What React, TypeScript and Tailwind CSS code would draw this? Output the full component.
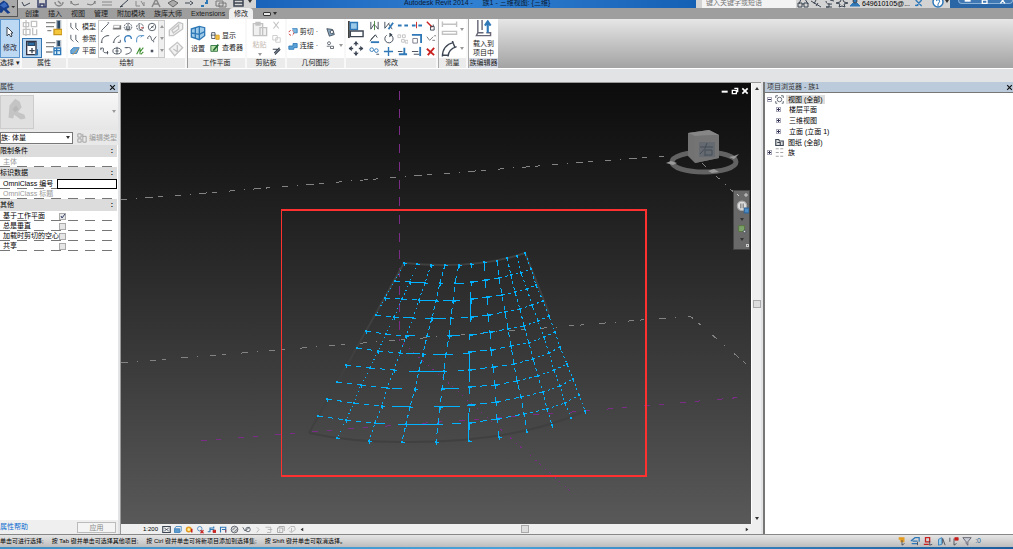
import React from "react";
import type { ReactNode } from "react";

type Glyph = { label: string; art: ReactNode };

const INK = "#3c4653";
const BLUE = "#2f78b8";
const RED = "#c8201e";
const PALE = "#c2c2c2";
const CYAN = "#00b2ff";

function Svg({ children, className = "size-3", box = "0 0 12 12" }: { children: ReactNode; className?: string; box?: string }) {
  return (
    <svg viewBox={box} className={`block shrink-0 ${className}`} fill="none" stroke={INK} strokeWidth="1" aria-hidden="true">
      {children}
    </svg>
  );
}

function IconButton({ label, art, className = "size-3" }: Glyph & { className?: string }) {
  return (
    <button type="button" aria-label={label} className="flex items-center justify-center">
      <Svg className={className}>{art}</Svg>
    </button>
  );
}

function Panel({ title, width, children, highlight = false }: { title: string; width: string; children: ReactNode; highlight?: boolean }) {
  return (
    <section className={`flex shrink-0 flex-col bg-white ${width}`}>
      <div className="flex flex-1 items-center justify-center overflow-hidden">{children}</div>
      <h2 className={`h-[10px] text-center text-[7px] leading-[10px] text-[#222] ${highlight ? "bg-[#d5d9e4]" : "bg-[#ebebeb]"}`}>{title}</h2>
    </section>
  );
}

const quickTools: Glyph[] = [
  { label: "打开", art: <path d="M2 2 4 6l6-3" /> },
  { label: "保存", art: <path d="M2 0v7h8V0M4 7V4h4v3" stroke="#37406b" strokeWidth="1.5" /> },
  { label: "同步", art: <path d="M2 2a4 4 0 0 0 8 0M5 1l3 3" stroke="#888" strokeWidth="1.5" /> },
  { label: "放弃", art: <path d="M2 1q1 4 4 4l4-1M2 1v3" stroke="#777" /> },
  { label: "重做", art: <path d="M10 1q-1 4-4 4L2 4M10 1v3" stroke="#777" /> },
  { label: "测量", art: <path d="M1 2h10M1 5h10" stroke="#888" /> },
  { label: "对齐", art: <path d="m2 7 8-7M2 7l3-1" /> },
  { label: "标记", art: <path d="M2 1v5h4M7 1l3 5V2" stroke="#888" /> },
  { label: "文字", art: <path d="m2 7 4-8 4 8M4 4h4" stroke="#888" strokeWidth="1.5" /> },
  { label: "三维", art: <path d="m1 3 5-3 5 3-5 4Z" stroke="#666" fill="#aaa" /> },
  { label: "剖面", art: <path d="M2 3h5M7 1l3 2-3 2" /> },
  { label: "细线", art: <path d="M2 6h3M6 3h3M8 0v2" stroke={BLUE} strokeWidth="2" /> },
  { label: "窗口", art: <path d="M1 1h7v5H1zM4 3h7v4H4z" stroke="#777" /> },
  { label: "切换窗口", art: <path d="M2 0h9v6H2zM2 3h9" strokeWidth="1.5" /> },
];

const drawTools: Glyph[] = [
  { label: "直线", art: <path d="m2 10 8-8M1 11h2M9 1h2" /> },
  { label: "矩形", art: <><path d="M1 8h9V4" strokeWidth="2" stroke="#777" /><path d="M2 8V4h7" stroke="#aaa" /></> },
  { label: "内接多边形", art: <><circle cx="6" cy="6" r="4.5" strokeDasharray="2 1" /><path d="M6 2v7M4 5v4h4V5" /></> },
  { label: "外接多边形", art: <><circle cx="6" cy="6" r="4" strokeDasharray="3 1" /><path d="M5 3v5l5 3" /><path d="M7 7h3" stroke={RED} /></> },
  { label: "圆形", art: <><circle cx="6" cy="6" r="4.5" /><path d="m4 8 4-4M5 6h3" /></> },
  { label: "起点终点半径弧", art: <path d="M2 10Q2 3 9 2M1 10h2M8 2h3" /> },
  { label: "圆心端点弧", art: <path d="M2 10Q3 4 9 2M7 10h3V7M1 10h2" /> },
  { label: "相切端点弧", art: <path d="M3 10Q0 3 6 2q4 0 4 4" stroke={BLUE} strokeWidth="1.5" /> },
  { label: "圆角弧", art: <path d="M2 10V7q0-5 5-5h4M7 4l2-2" stroke={BLUE} /> },
  { label: "样条曲线", art: <path d="M1 4q3-4 4 1t3 2l3-4M1 4v2M8 8v2" /> },
  { label: "拟合样条", art: <path d="M1 3q4-2 3 2t6 3M1 2v3M9 6v4" /> },
  { label: "椭圆", art: <><ellipse cx="6" cy="6" rx="5" ry="3.5" /><path d="M6 1v9M4 6h4" /></> },
  { label: "半椭圆", art: <path d="M4 2q6-1 6 3t-7 5M2 2h3" /> },
  { label: "拾取线", art: <path d="m2 10 4-8v8M6 7l4-5M7 10l3-3" stroke="#3f8f32" strokeWidth="1.3" /> },
  { label: "点图元", art: <rect x="5" y="5" width="2" height="2" fill="#667" /> },
];

const modifyTools: Glyph[] = [
  { label: "镜像拾取轴", art: <><path d="M2 2v8l4-6v6M10 2v8L7 6" /><path d="M6 1v10" stroke="#4b8b43" /></> },
  { label: "镜像绘制轴", art: <><path d="M2 2v7l5-6M6 4l4 6" /><path d="m6 10 5-7" stroke={BLUE} strokeWidth="2" /></> },
  { label: "拆分图元", art: <path d="M1 5h4v2H1zM8 5h4v2H8z" fill={BLUE} stroke={BLUE} strokeWidth="0" /> },
  { label: "间隙拆分", art: <><path d="M1 6h4M8 6h4" stroke={BLUE} strokeWidth="2" /><path d="M6 2v7" stroke={RED} /></> },
  { label: "解锁", art: <><path d="m2 2 6 6" stroke={RED} strokeWidth="1.5" /><path d="M6 7h4v4H6zM9 5v2" /></> },
  { label: "偏移", art: <><path d="m1 9 6-7M2 7l5-5 2 3" stroke={INK} /><path d="M2 10h9" stroke={BLUE} strokeWidth="2" /></> },
  { label: "旋转", art: <><path d="M4 2.5A4.5 4.5 0 1 0 8 2" /><path d="m7 0 3 2-3 2" fill={INK} /></> },
  { label: "阵列", art: <path d="M1 2h3v3H1zM6 2h3v3H6zM5 7h3v3H5zM9 8h3v3H9z" stroke={PALE} /> },
  { label: "缩放", art: <><path d="M1 2h10v9" stroke={BLUE} strokeWidth="2" /><path d="M2 6h5v5H2z" stroke="#778" /></> },
  { label: "锁定", art: <path d="m2 4 3 4 4-4M8 8h3M10 3h2" stroke="#777" /> },
  { label: "复制", art: <><circle cx="3" cy="4" r="2" stroke={BLUE} /><circle cx="8" cy="5" r="2" stroke={BLUE} /><path d="M8 9h3" /></> },
  { label: "修剪", art: <path d="M6 1v10M1 6h10M4 6h4" stroke={BLUE} strokeWidth="1.5" /> },
  { label: "修剪延伸单个", art: <><path d="M2 9h9M8 2v6" stroke={BLUE} strokeWidth="2" /><path d="M1 6h5" /></> },
  { label: "修剪延伸多个", art: <><path d="M10 1v10" stroke={BLUE} strokeWidth="2" /><path d="M1 6h7M3 9h6" /></> },
  { label: "删除", art: <path d="m2 3 8 7M10 2 3 10" stroke={RED} strokeWidth="2" /> },
];

const viewTools: Glyph[] = [
  { label: "详细程度", art: <><path d="M1 2h10v8H1z" strokeWidth="1.5" /><path d="m3 4 6 4M9 4 3 8" /></> },
  { label: "视觉样式", art: <><path d="M2 5h7v5H2z" fill="#5a9bd0" stroke={BLUE} /><path d="M2 5 4 2h7v6L9 10" stroke={BLUE} /></> },
  { label: "日光路径", art: <><circle cx="5" cy="6" r="3" fill="#fff0a0" stroke="#e29a21" strokeWidth="2" /><path d="M9 5v5" stroke={RED} strokeWidth="2" /></> },
  { label: "阴影", art: <><circle cx="5" cy="5" r="3" stroke={BLUE} /><path d="m6 7 4 4M10 7l-4 4" stroke={RED} strokeWidth="1.5" /></> },
  { label: "渲染", art: <><path d="M1 9h3V4h5V2M4 6h5v4" stroke={BLUE} strokeWidth="1.5" /><path d="M8 7h4v3H8z" fill={RED} stroke={RED} /></> },
  { label: "裁剪视图", art: <><path d="M2 10V3h7v7M4 6h5" stroke={BLUE} strokeWidth="1.5" /><path d="M9 6v4" stroke={RED} /></> },
  { label: "显示裁剪", art: <><circle cx="6" cy="6" r="4.5" fill="#ddd" /><path d="m3 7 4-4M6 9l4-4" /></> },
  { label: "锁定三维", art: <><path d="m1 3 3 5 6-5" stroke={INK} /><circle cx="8" cy="6" r="3" /></> },
  { label: "临时隐藏", art: <path d="m5 3 3 3-3 4" stroke="#aaa" /> },
  { label: "显示隐藏", art: <path d="M2 3h7v7H4M5 6h6" stroke="#aaa" /> },
  { label: "属性预览", art: <path d="M2 4h7v6H2zM4 4V2h7v6M5 6v3" stroke="#999" /> },
  { label: "分析模型", art: <path d="m1 6 4-4h5l1 4-5 4-3-2M6 4v5" stroke="#aaa" /> },
];

const selectTools: Glyph[] = [
  { label: "选择链接", art: <><path d="M2 3h7M4 6h5" stroke="#e39b20" strokeWidth="3" /><path d="M6 5v6l3-2" /></> },
  { label: "选择底图图元", art: <><path d="m1 6 5-4h5v5M3 6h6M2 9h7" stroke={BLUE} strokeWidth="1.5" /><path d="M9 7v4" /></> },
  { label: "选择锁定图元", art: <><path d="M3 2h5v5H3zM1 10h6" stroke={RED} strokeWidth="1.5" /><path d="M8 6v5l3-1" /></> },
  { label: "按面选择", art: <><path d="m3 4 4-2v8l-4 1z" fill="#9bd0ec" stroke={BLUE} /><path d="m8 3 3 8M8 3v6" /></> },
  { label: "选择时拖拽", art: <><path d="M1 2v5M6 3v8l3-2" /><path d="M7 2h4v3H7z" fill={RED} stroke={RED} /></> },
  { label: "过滤器", art: <path d="M1 2h10L7 7v4L5 9V7z" stroke="#556" fill="#c8cdd4" /> },
];

const infoTools: Glyph[] = [
  { label: "搜索", art: <path d="M2 4 4-1M8-1l3 5M1 3h4v4H1zM7 3h4v4H7zM5 4h2" /> },
  { label: "通讯中心", art: <path d="m1 1 5 3 5 3M6 0l-2 4M8 3l-2 3" /> },
  { label: "订阅", art: <path d="M3 1q0 4 6 3M6 3v4H3h6M7 0l4 1" /> },
  { label: "收藏夹", art: <path d="m6-2 2 4 4 1-4 1 1 3-3-1-3 1 1-3-4-1 4-1Z" /> },
];

function Caret({ dim = false }: { dim?: boolean }) {
  return (
    <svg viewBox="0 0 4 3" className={`block h-[3px] w-1 shrink-0 ${dim ? "fill-[#999]" : "fill-[#333]"}`} aria-hidden="true">
      <path d="M0 0h4L2 3Z" />
    </svg>
  );
}

function TitleBar() {
  return (
    <header className="flex h-2 shrink-0 overflow-hidden bg-[#1c66bb]">
      <div className="flex w-64 shrink-0 items-start justify-between bg-[#d3d3d3] pr-1 pl-5">
        {quickTools.map((t) => (
          <IconButton key={t.label} {...t} className="h-3 w-3" />
        ))}
        <Caret />
      </div>
      <h1 className="min-w-0 flex-1 bg-linear-to-r from-[#1a63bb] via-[#2f7fd2] to-[#1460b4] pl-[148px] text-[7px] leading-[5px] whitespace-pre text-[#0b1a33]">
        Autodesk Revit 2014 -     族1 - 三维视图: {"{三维}"}
      </h1>
      <div className="flex w-[254px] shrink-0 items-start gap-px bg-[#d3d3d3] pl-[6px]">
        <input aria-label="搜索" placeholder="键入关键字或短语" className="h-2 w-[94px] shrink-0 bg-[#f3f3f3] pb-1 pl-1 text-[7px] leading-[4px] placeholder:text-[#777]" />
        {infoTools.map((t) => (
          <IconButton key={t.label} {...t} className="size-3" />
        ))}
        <Svg className="size-3"><path d="M1 6h10L8 3H4z" fill={BLUE} stroke={BLUE} /><circle cx="6" cy="1" r="2" fill={BLUE} /></Svg>
        <span className="text-[7px] leading-[7px] text-black">649610105@...</span>
        <Svg className="ml-1 size-2"><path d="M1 0 10 9M10 0 2 9M0 8h5" stroke={BLUE} strokeWidth="2" /></Svg>
        <Svg className="ml-2 size-3"><circle cx="6" cy="2" r="5" fill="#fff" stroke={BLUE} strokeWidth="1.5" /><path d="M4 1q2-3 4 0L6 4v2" stroke={BLUE} /></Svg>
        <Caret />
      </div>
      <div className="flex w-[63px] shrink-0 items-start bg-[#2a66a6] pl-2">
        <div className="flex h-1 flex-1 justify-around rounded-b-sm border border-t-0 border-[#8bb2d8] bg-[#4078b3]">
          <Svg className="size-2"><path d="M1 1h9" stroke="#fff" strokeWidth="3" /></Svg>
          <Svg className="size-2"><path d="M2 0h7v5H2z" stroke="#fff" strokeWidth="2" /></Svg>
          <Svg className="size-2"><path d="m2-3 7 8M9-3 2 5" stroke="#fff" strokeWidth="2" /></Svg>
        </div>
      </div>
    </header>
  );
}

function TabBar() {
  const tabs = ["创建", "插入", "视图", "管理", "附加模块", "族库大师", "Extensions"];
  return (
    <nav className="flex h-[11px] shrink-0 items-stretch bg-[#9e9e9e] text-[7px] leading-[11px] text-[#1c1c1c]">
      <div className="flex w-[229px] gap-[9px] pl-[25px]">
        {tabs.map((t) => (
          <a key={t} href="#ribbon" className="whitespace-nowrap">{t}</a>
        ))}
      </div>
      <a href="#ribbon" className="w-6 rounded-t-sm bg-[#efefef] text-center">修改</a>
      <button type="button" aria-label="最小化面板" className="flex items-center gap-0.5 pl-2.5">
        <span className="block h-1 w-2 rounded-[1px] border border-[#333] bg-[#e8e8e8]" />
        <Caret />
      </button>
    </nav>
  );
}

function SmallCommand({ label, art, dim = false }: Glyph & { dim?: boolean }) {
  return (
    <button type="button" className={`flex items-center gap-0.5 text-[7px] leading-[10px] whitespace-nowrap ${dim ? "text-[#aaa]" : "text-[#222]"}`}>
      <Svg className="size-[10px]">{art}</Svg>
      {label}
    </button>
  );
}

function Ribbon() {
  return (
    <div id="ribbon" className="flex h-[50px] shrink-0 border-b border-white bg-linear-to-b from-[#e6e6e6] to-[#a3a3a3]">
      <div className="flex gap-0.5 bg-[#f8f8f8]">
        <Panel title="选择 ▾" width="w-5 whitespace-nowrap">
          <button type="button" className="flex size-full flex-col items-center justify-center gap-1.5 border border-[#5a94cc] bg-[#bcd8f2] text-[7px] leading-[8px] text-[#223]">
            <Svg className="h-3 w-2" box="0 0 8 12"><path d="M1 1v9l2-2 2 3 1-1-1-3h2z" fill="#fff" /></Svg>
            修改
          </button>
        </Panel>
        <Panel title="属性" width="w-11">
          <div className="grid grid-cols-2 items-center gap-x-1 gap-y-0.5">
            <Svg className="size-4"><path d="M1 2h4v3H1zM7 1h4v4H7zM1 7h5v4H1zM8 6v5h3V7M3 0v12" stroke={PALE} /></Svg>
            <Svg className="size-4"><path d="M0 2h7M0 5h6M1 8h3" stroke="#888" /><path d="M8 0h3v7H8z" fill="#2c4a66" stroke="#b5bdc6" /><path d="M6 7h6v4H6z" fill="#f3c63c" stroke="#c9971e" /></Svg>
            <button type="button" aria-label="属性" className="border border-[#3475b4] bg-[#b7d6f1] p-px">
              <Svg className="size-4"><path d="M2 1h7v10H2z" fill="#fff" stroke="#334" /><path d="M3 2h5v2H3z" fill={BLUE} stroke="#2c4a66" /><path d="M4 8h4M6 6v4" /><path d="M10 7v4H8" stroke={BLUE} /></Svg>
            </button>
            <Svg className="size-4"><path d="M0 2h7M0 5h6M0 9h5" stroke="#888" /><path d="M8 0h3v5H8z" fill="#2c4a66" stroke="#b5bdc6" /><path d="M6 6h5v5H6zM6 8h5M8 6v5" fill="#d8effa" stroke={BLUE} /></Svg>
          </div>
        </Panel>
        <Panel title="绘制" width="w-[117px]">
          <div className="flex flex-1 items-center gap-0.5 pl-0.5">
            <div className="flex flex-col gap-0.5">
              <SmallCommand label="模型" art={<path d="M1 1v5l3 3M7 1v6l3 3" />} />
              <SmallCommand label="参照" art={<path d="M1 1v5l3 3M7 1v6l3 3" />} />
              <SmallCommand label="平面" art={<><path d="m1 5 3-3h7l-3 7H1z" fill="#6da8d6" stroke={BLUE} /><path d="m3 11 7-8" stroke="#d8993f" /></>} />
            </div>
            <div className="flex flex-1 border border-[#c9c9c9]">
              <div className="grid flex-1 grid-cols-5">
                {drawTools.map((t) => (
                  <IconButton key={t.label} {...t} className="h-3 w-[10px]" />
                ))}
              </div>
              <div className="flex w-1.5 flex-col items-center justify-around border-l border-[#d6d6d6] bg-[#efefef]">
                <span className="rotate-180"><Caret dim /></span>
                <Caret dim />
                <Caret dim />
              </div>
            </div>
            <div className="flex flex-col gap-1">
              <Svg className="h-4 w-[18px]"><path d="m1 7 7-6 3 1v4l-7 5H1zM3 7l5-4v3L4 9z" stroke="#c4c4c4" fill="#f2f2f2" /></Svg>
              <Svg className="h-4 w-[18px]"><path d="m1 6 6-5 4 4-6 6zM4 6l3 2M7 3v5" stroke="#c4c4c4" fill="#f2f2f2" /></Svg>
            </div>
          </div>
        </Panel>
        <Panel title="工作平面" width="w-[58px] border-l border-[#999]">
          <div className="flex gap-1">
            <button type="button" className="flex flex-col items-center gap-1 text-[7px] leading-[8px] text-[#222]">
              <Svg className="size-4"><path d="m1 3 6-2 4 1v6l-4 3-6-2z" fill="#9fcbe8" stroke={BLUE} /><path d="M4 2v8M7 1v10M1 6l6 1 4-2" stroke={BLUE} /></Svg>
              设置
            </button>
            <div className="flex flex-col justify-end gap-0.5">
              <SmallCommand label="显示" art={<><path d="M2 2h4v7H2zM1 5h6" /><path d="M7 5h4v5H7z" fill="#f2c445" stroke="#d79a21" /></>} />
              <SmallCommand label="查看器" art={<><path d="M1 3h8v7H1z" fill="#b9e0a8" stroke="#246b35" /><path d="m4 9 6-7" stroke="#246b35" strokeWidth="2" /></>} />
            </div>
          </div>
        </Panel>
        <Panel title="剪贴板" width="w-[38px]">
          <div className="flex gap-1">
            <button type="button" className="flex flex-col items-center gap-1 text-[7px] leading-[8px] text-[#c4b8ae]">
              <Svg className="size-4"><path d="M1 2h7v9H1zM3 1h3v2H3zM6 5h5v6H6z" stroke={PALE} fill="#f0f0f0" /></Svg>
              粘贴
              <Caret dim />
            </button>
            <div className="flex flex-col justify-between">
              <Svg className="size-[9px]"><path d="m2 1 7 9M9 1 2 10" stroke={PALE} strokeWidth="1.5" /></Svg>
              <Svg className="size-[9px]"><path d="M1 2h6v6H1zM5 5h6v6H5z" stroke={PALE} fill="#fff" /></Svg>
              <Svg className="size-[9px]"><path d="M1 3h6M3 8l7-7M4 10l7-7" strokeWidth="1.5" /></Svg>
            </div>
          </div>
        </Panel>
        <Panel title="几何图形" width="w-[57px]">
          <div className="flex items-center gap-2">
            <div className="flex flex-col gap-1">
              <SmallCommand label="剪切 ·" art={<><circle cx="4" cy="7" r="3" stroke={RED} strokeDasharray="3 2" /><path d="M5 2h6v5H7" fill="#7db8df" stroke={BLUE} /></>} />
              <SmallCommand label="连接 ·" art={<path d="M1 6h5V3h5v5H7v2H1z" fill="#5aa2d5" stroke={BLUE} />} />
            </div>
            <div className="flex flex-col gap-1">
              <Svg className="size-[10px]"><path d="m1 2 7 1 2 6-6 2z" fill="#8aa9c0" /><circle cx="7" cy="6" r="2" fill="#fff" /></Svg>
              <div className="flex items-center gap-1">
                <Svg className="size-[9px]"><circle cx="4" cy="3" r="2" /><path d="M1 7h4M6 7h4v3H6z" /></Svg>
                <Caret dim />
              </div>
            </div>
          </div>
        </Panel>
        <Panel title="修改" width="w-[90px]">
          <div className="flex items-center gap-1">
            <div className="flex flex-col gap-0.5">
              <Svg className="h-[17px] w-[18px]"><path d="M1 0v12" stroke="#111" /><path d="M2 1h5v5H2z" fill="#9bc9ea" stroke={BLUE} /><path d="M2 7h9v4H2z" fill="#fff" /></Svg>
              <Svg className="h-[17px] w-[18px]"><path d="M6 1v3M6 8v3M1 6h3M8 6h3" /><path d="m4 3 2-2 2 2zM4 9l2 2 2-2zM3 4 1 6l2 2zM9 4l2 2-2 2z" fill={INK} strokeWidth="0" /></Svg>
            </div>
            <div className="grid grid-cols-5 gap-x-[3px] gap-y-0.5">
              {modifyTools.map((t) => (
                <IconButton key={t.label} {...t} className="size-[11px]" />
              ))}
            </div>
          </div>
        </Panel>
        <Panel title="测量" width="w-7 border-l border-[#aaa]">
          <div className="flex gap-0.5">
            <div className="flex flex-col gap-1">
              <Svg className="size-[17px]"><path d="M1 3h10M1 1v4M11 1v4M1 8h10v2H1z" stroke={PALE} /></Svg>
              <Svg className="size-[17px]"><path d="M1 11Q1 3 9 1M5 11q0-5 6-7M1 10h4M8 0l2 5" /></Svg>
            </div>
            <div className="flex flex-col items-center justify-around"><Caret dim /><Caret dim /></div>
          </div>
        </Panel>
        <Panel title="族编辑器" width="w-[30px] border-l border-[#aaa]" highlight>
          <button type="button" className="flex flex-col items-center gap-0.5 text-[7px] leading-[9px] whitespace-nowrap text-[#222]">
            <Svg className="size-[17px]"><path d="M2 0v9h4M2 9 1 11h10V9H8M5 0v7" stroke="#667" /><path d="M9 9V2M7 4l2-3 2 3" stroke={BLUE} strokeWidth="1.5" /></Svg>
            <span>载入到<br />项目中</span>
          </button>
        </Panel>
      </div>
    </div>
  );
}

function CloseMark() {
  return <Svg className="size-[7px]"><path d="m2 2 8 8M10 2l-8 8" stroke="#111" strokeWidth="2" /></Svg>;
}

const dashRule = "bg-[repeating-linear-gradient(90deg,#777_0_10px,transparent_10px_17px)] bg-[length:100%_1px] bg-bottom bg-no-repeat";

function GroupRow({ name }: { name: string }) {
  return (
    <tr className="h-3 bg-[#dcdcdc]">
      <th colSpan={2} className="p-0 text-left font-normal">
        <div className="flex items-center justify-between pr-1"><span>{name}</span><span className="font-bold">:</span></div>
      </th>
    </tr>
  );
}

function TextRow({ name, dim = false, editable = false }: { name: string; dim?: boolean; editable?: boolean }) {
  return (
    <tr className={`h-[10px] ${dashRule} ${dim ? "text-[#999]" : ""}`}>
      <td className="w-[57px] p-0 pl-[3px]">{name}</td>
      <td className="p-0">{editable && <input aria-label={name} className="block h-[10px] w-full border border-black bg-white" />}</td>
    </tr>
  );
}

function CheckRow({ name, id, checked = false }: { name: string; id: string; checked?: boolean }) {
  return (
    <tr className={`h-[10px] ${dashRule}`}>
      <td className="p-0 pl-[3px]"><label htmlFor={id}>{name}</label></td>
      <td className="p-0 pl-0.5">
        <span className="grid size-[7px]">
          <input id={id} type="checkbox" defaultChecked={checked} className="peer col-start-1 row-start-1 size-[7px] appearance-none border border-[#aaa] bg-[#e6e6e6]" />
          <svg viewBox="0 0 7 7" className="pointer-events-none col-start-1 row-start-1 hidden fill-none stroke-[#33406b] peer-checked:block" aria-hidden="true"><path d="m2 3 1 2 3-4" /></svg>
        </span>
      </td>
    </tr>
  );
}

function Properties() {
  return (
    <aside className="flex w-[118px] shrink-0 flex-col bg-[#efefef] text-[7px] leading-[10px] text-black">
      <div className="flex h-[10px] shrink-0 items-center justify-between bg-[#bccbdb] pr-0.5 text-[#333]"><h2>属性</h2><CloseMark /></div>
      <div className="flex h-[38px] shrink-0 items-center justify-between border-t border-[#777] bg-linear-to-b from-[#f7f7f7] to-[#e6e6e6] pr-0.5">
        <svg viewBox="0 0 34 34" className="size-[34px] border border-[#ccc] bg-[#e0e0e0]" aria-hidden="true">
          <path d="m9 10 6-7 5 3 2 6-4 5 7 3 1 4-5 1-7-5-1 4-5-1z" fill="#c4c4c4" />
          <path d="m12 14 4-4 3 4-4 3z" fill="#b8b8b8" />
        </svg>
        <Caret dim />
      </div>
      <div className="flex h-[15px] shrink-0 items-center gap-1 bg-[#e9e9e9]">
        <div className="flex h-3 w-[73px] items-center border border-[#777] bg-white pr-0.5">
          <select aria-label="类型" className="min-w-0 flex-1 appearance-none"><option>族: 体量</option></select>
          <Caret />
        </div>
        <button type="button" className="flex items-center gap-0.5 whitespace-nowrap text-[#999]">
          <Svg className="size-[10px]"><path d="M1 1h4v4H1zM1 7h4v4H1zM7 1v10h4V4H7" stroke="#999" /></Svg>
          编辑类型
        </button>
      </div>
      <div className="flex-1 bg-white">
        <table className="w-[117px] table-fixed border-collapse text-[7px] leading-[10px] whitespace-nowrap">
          <colgroup><col className="w-[57px]" /><col /></colgroup>
          <tbody>
            <GroupRow name="限制条件" />
            <TextRow name="主体" dim />
            <GroupRow name="标识数据" />
            <TextRow name="OmniClass 编号" editable />
            <TextRow name="OmniClass 标题" dim />
            <GroupRow name="其他" />
            <CheckRow id="workplane" name="基于工作平面" checked />
            <CheckRow id="vertical" name="总是垂直" />
            <CheckRow id="voids" name="加载时剪切的空心" />
            <CheckRow id="shared" name="共享" />
          </tbody>
        </table>
      </div>
      <div className="flex h-[14px] shrink-0 items-center justify-between pr-0.5">
        <a href="#help" className="text-[#0a6bd0]">属性帮助</a>
        <button type="button" className="h-[11px] w-[39px] border border-[#bbb] bg-[#f4f4f4] leading-[9px] text-[#888]">应用</button>
      </div>
    </aside>
  );
}

type Pt = [number, number];
const columns: Pt[][] = [
  [[404, 263], [395, 281], [385, 298], [376, 315], [366, 331], [357, 348], [346, 365], [337, 382], [327, 399], [318, 416], [309, 433]],
  [[417, 264], [410, 282], [402, 299], [394, 317], [386, 334], [378, 351], [370, 368], [361, 385], [354, 403], [346, 420], [337, 438]],
  [[431, 265], [425, 283], [419, 300], [413, 318], [406, 336], [400, 353], [394, 370], [387, 388], [382, 406], [375, 423], [369, 441]],
  [[445, 265], [440, 283], [436, 301], [432, 318], [427, 336], [423, 354], [419, 371], [415, 389], [410, 407], [406, 424], [402, 442]],
  [[459, 265], [455, 283], [453, 301], [451, 318], [449, 336], [446, 354], [444, 371], [442, 389], [440, 407], [438, 424], [436, 442]],
  [[471, 264], [471, 282], [471, 299], [471, 317], [470, 335], [469, 352], [469, 370], [469, 387], [469, 405], [469, 423], [469, 441]],
  [[484, 262], [485, 280], [487, 297], [488, 315], [490, 332], [491, 350], [493, 367], [495, 385], [496, 402], [497, 419], [499, 437]],
  [[497, 261], [499, 278], [502, 295], [505, 312], [508, 329], [511, 346], [514, 364], [517, 381], [521, 397], [524, 414], [527, 432]],
  [[507, 258], [511, 275], [515, 292], [520, 309], [524, 326], [529, 343], [533, 359], [538, 376], [543, 392], [547, 409], [552, 425]],
  [[517, 256], [521, 273], [527, 289], [532, 305], [538, 321], [544, 337], [549, 353], [554, 370], [560, 386], [565, 403], [571, 418]],
  [[525, 253], [531, 269], [536, 285], [543, 301], [549, 316], [555, 332], [560, 347], [567, 364], [573, 379], [579, 395], [585, 411]],
];
const columnDash = ["1 3", "1 3", "2 3", "4 3", "6 5", "4 14", "9 8", "5 4", "3 3", "2 3", "2 3"];
const rowDash = ["5 5", "5 5", "1 40", "1 40", "1 40", "7 4", "5 4", "3 3", "2 3", "2 3"];
const solids: [number, number, number][] = [
  [414, 425, 282], [455, 464, 283],
  [418, 438, 300], [443, 460, 300],
  [403, 412, 317], [425, 446, 318], [461, 468, 317],
  [406, 415, 335], [447, 460, 335],
  [406, 420, 353], [433, 453, 354], [463, 470, 353],
  [409, 444, 371], [458, 464, 370],
  [392, 402, 388], [442, 459, 388],
  [392, 411, 406], [434, 460, 406], [467, 475, 405],
  [376, 385, 423], [398, 443, 424], [452, 461, 423],
];

function Mesh() {
  return (
    <g stroke={CYAN} shapeRendering="crispEdges">
      {columns.map((c, i) => (
        <polyline key={i} points={(i === 0 ? c.slice(0, 4) : c).map((p) => p.join()).join(" ")} strokeDasharray={columnDash[i]} />
      ))}
      {columns.slice(0, 10).map((c, i) =>
        c.slice(1, 10).map(([x, y], r) => (
          <path key={`${i}-${r}`} d={`M${x} ${y}L${columns[i + 1][r + 1].join(" ")}`} strokeDasharray={rowDash[i]} />
        )),
      )}
      {solids.map(([a, b, y]) => (
        <path key={`${a}-${y}`} d={`M${a} ${y + 0.5}H${b}`} />
      ))}
      <path d="M470.5 292V321M469.5 352V382M468.5 413V441" />
      {columns.map((c, i) =>
        c.map(([x, y], r) =>
          i === 0 && r === 10 ? null : (
            <g key={`${i}.${r}`} fill={CYAN} stroke="none">
              <rect x={x - 1} y={y - 1} width="2" height="2" />
              {(i * 3 + r) % 2 === 0 && <rect x={x} y={y - 1} width="1" height="4" />}
              {i < 7 && <rect x={x - 1} y={y} width="4" height="1" />}
            </g>
          ),
        ),
      )}
    </g>
  );
}

function Viewport() {
  return (
    <main className="flex min-w-0 flex-1 flex-col border-t border-l border-[#999]">
      <div className="flex min-h-0 flex-1">
        <div className="relative min-w-0 flex-1 overflow-hidden bg-linear-to-b from-[#0c0c0c] to-[#595959]">
          <svg viewBox="121 83 630 441" className="size-full" fill="none" role="img" aria-label="三维视图">
            <g shapeRendering="crispEdges">
              <path d="M121 200 400 177 664 156" stroke="#838383" strokeDasharray="6 9 1 8 8 5 5 12" />
              <path d="M121 363 399 340 690 316 751 368" stroke="#838383" strokeDasharray="7 9 1 12 6 6 4 15" />
              <path d="m702 163 26 24 23 21" stroke="#838383" strokeDasharray="5 7 1 6" />
              <path d="M399.5 91V340" stroke="#7a2c86" strokeDasharray="9 8.7" />
              <path d="m201 441 109-9 90-7 185-14 160-14" stroke="#7a2c86" strokeDasharray="6 9 5 17" />
              <path d="m399 340 46 40 131 116" stroke="#7a2c86" strokeDasharray="1 4 2 6" />
            </g>
            <path d="M309 433 404 263Q475 270 525 253L549 313M309 433Q350 442 402 442 515 443 585 411" stroke="#404040" strokeWidth="2" />
            <Mesh />
            <path d="M281.5 209V477" stroke="#ff3030" />
            <path d="M281 210H646V476H281" stroke="#ff3030" strokeWidth="2" />
          </svg>
          <div className="absolute top-1 right-0.5 flex gap-0.5">
            <Svg className="size-2"><path d="M1 7h9" stroke="#fff" strokeWidth="3" /></Svg>
            <Svg className="size-2"><path d="M2 5h6v5H2zM5 2h5v6" stroke="#fff" strokeWidth="2" /></Svg>
            <Svg className="size-2"><path d="m2 2 8 8M10 2l-8 8" stroke="#fff" strokeWidth="2.5" /></Svg>
          </div>
          <svg viewBox="0 0 76 50" className="absolute top-[45px] right-[10px] h-[50px] w-[76px]" aria-hidden="true">
            <ellipse cx="39" cy="34" rx="32" ry="10" fill="none" stroke="#626262" strokeWidth="5" />
            <path d="m1 35 5-2 6 2-4 2zM64 29l5-1 5-2-5 5zM43 43l6-2 5 3-7 1z" fill="#999" />
            <path d="m23 5 21-3 10 5v23l-24 5-7-7z" fill="#727272" />
            <path d="m23 5 21-3 10 5-24 1z" fill="#868686" />
            <path d="m30 8 24-1v23l-24 5z" fill="#747474" />
            <path d="M34 14h16v15H34z" fill="#646a70" />
            <path d="M35 19h13M42 15q-1 6-7 11M40 22v6M40 22h7v5h-7" fill="none" stroke="#444c55" />
          </svg>
          <div className="absolute top-[107px] right-px flex h-[60px] w-[17px] flex-col items-center justify-between border border-[#444] bg-[#696969] py-0.5">
            <Svg className="h-1 w-3" box="0 0 12 4"><path d="m1 1 2 2M9 1h2v2H9z" stroke="#ccc" /></Svg>
            <Svg className="size-[14px]"><circle cx="6" cy="5" r="4" fill="#ddd" stroke="#aaa" /><path d="M5 3v4M7 3v4" stroke="#777" /><path d="M8 7h4v4H8z" fill="#4b8dc8" stroke="#34699e" /></Svg>
            <Caret />
            <Svg className="size-[10px]"><path d="M2 2h7v7H2z" fill="#7ba268" stroke="#56753f" /><circle cx="9" cy="9" r="1.5" fill="#ddd" /></Svg>
            <Caret />
            <span className="size-[3px] self-end border border-[#ccc]" />
          </div>
        </div>
        <div className="flex w-[10px] shrink-0 flex-col items-center justify-between border-l border-white bg-[#efefef] py-1">
          <span className="rotate-180"><Caret /></span>
          <span className="size-2 border border-[#aaa] bg-[#ddd]" />
          <Caret />
        </div>
      </div>
      <div className="flex h-[10px] shrink-0 items-center bg-[#efefef]">
        <span className="w-[41px] pr-1 text-right text-[6px] leading-[10px]">1:200</span>
        <div className="flex w-[134px] justify-between">
          {viewTools.map((t) => (
            <IconButton key={t.label} {...t} className="size-[9px]" />
          ))}
        </div>
        <span className="ml-1 rotate-90"><Caret /></span>
        <div className="flex flex-1 items-center justify-between pr-3">
          <span />
          <span className="size-2 border border-[#aaa] bg-[#ddd]" />
          <span className="-rotate-90"><Caret /></span>
        </div>
      </div>
    </main>
  );
}

function TreeItem({ label, mark, icon, nested = false, selected = false }: { label: string; mark?: string; icon?: ReactNode; nested?: boolean; selected?: boolean }) {
  return (
    <li className={`flex items-center ${nested ? "h-[11px] pl-[11px]" : "h-[10px] pl-0.5"}`}>
      <span className={`flex items-center ${nested ? "w-[11px]" : "w-2"}`}>
        {mark && (
          <svg viewBox="0 0 5 5" className="size-[5px] fill-none" shapeRendering="crispEdges" aria-hidden="true">
            <path d="M.5.5h4v4h-4z" stroke="#aab" />
            <path d={mark === "+" ? "M1 2.5h3M2.5 1v3" : "M1 2.5h3"} stroke="#335" />
          </svg>
        )}
      </span>
      {!nested && <span className="mr-0.5">{icon}</span>}
      <span className={`px-0.5 leading-[9px] ${selected ? "bg-[#dedede]" : ""}`}>{label}</span>
    </li>
  );
}

function Browser() {
  return (
    <aside className="flex w-[250px] shrink-0 flex-col border-l-2 border-[#777] bg-white text-[7px] text-black">
      <div className="flex h-[10px] shrink-0 items-center justify-between bg-[#bccbdb] pl-0.5 leading-[10px] text-[#333]"><h2>项目浏览器 - 族1</h2><CloseMark /></div>
      <ul className="border-t border-[#777] pt-px">
        <TreeItem label="视图 (全部)" mark="-" selected icon={<Svg className="size-[9px]"><path d="M4 1H1v3M8 1h3v3M1 8v3h2M11 8v3H9" /><circle cx="6" cy="6" r="3" /></Svg>} />
        <TreeItem label="楼层平面" mark="+" nested />
        <TreeItem label="三维视图" mark="+" nested />
        <TreeItem label="立面 (立面 1)" mark="+" nested />
        <TreeItem label="图纸 (全部)" icon={<Svg className="size-[9px]"><path d="M1 2h4l1 2h5v6H1zM3 6h4v4" strokeWidth="1.5" fill="#ddd" /></Svg>} />
        <TreeItem label="族" mark="+" icon={<Svg className="size-[9px]"><path d="M1 1h4M7 1h4M1 6h4M7 6h4M1 11h4M7 11h4" stroke="#888" /></Svg>} />
      </ul>
    </aside>
  );
}

const hints = [
  "单击可进行选择;",
  "按 Tab 键并单击可选择其他项目;",
  "按 Ctrl 键并单击可将新项目添加到选择集;",
  "按 Shift 键并单击可取消选择。",
];

export default function App() {
  return (
    <div className="relative flex h-screen flex-col overflow-hidden bg-[#e2e3e5] font-['Liberation_Sans','Noto_Sans_CJK_SC',sans-serif]">
      <TitleBar />
      <TabBar />
      <Ribbon />
      <div className="h-[13px] shrink-0" />
      <div className="flex min-h-0 flex-1 gap-0.5">
        <Properties />
        <Viewport />
        <Browser />
      </div>
      <footer className="flex h-[13px] shrink-0 items-center justify-between border-t border-[#888] bg-linear-to-b from-[#e6e6e6] to-[#bdbdbd] pr-8 text-black">
        <p className="flex gap-2 text-[6px] leading-[12px] whitespace-nowrap">
          {hints.map((h) => (
            <span key={h}>{h}</span>
          ))}
        </p>
        <div className="flex items-center gap-[3px] text-[7px] leading-[12px]">
          {selectTools.map((t) => (
            <IconButton key={t.label} {...t} className="size-[10px]" />
          ))}
          <span className="text-[#245f8f]">:0</span>
        </div>
      </footer>
      <div className="h-0.5 shrink-0 bg-linear-to-r from-[#3f8fc4] via-[#4aa0d8] to-[#1c5c9c]" />
      <button type="button" aria-label="应用程序菜单" className="absolute top-0 left-0 flex h-[17px] w-[18px] items-end border-r border-b border-[#555] bg-[#a9a9a9]">
        <svg viewBox="0 0 18 16" className="h-4 w-[18px]" aria-hidden="true">
          <path d="M0 3 4 0l4 3 2 4-3 2 4 4-3 1-4-4-2 3H0z" fill="#173f8c" />
          <path d="M0 5 5 2l3 4-4 2z" fill="#3a6bc0" />
          <path d="M12 6h4l-2 2z" fill="#333" />
        </svg>
      </button>
    </div>
  );
}
